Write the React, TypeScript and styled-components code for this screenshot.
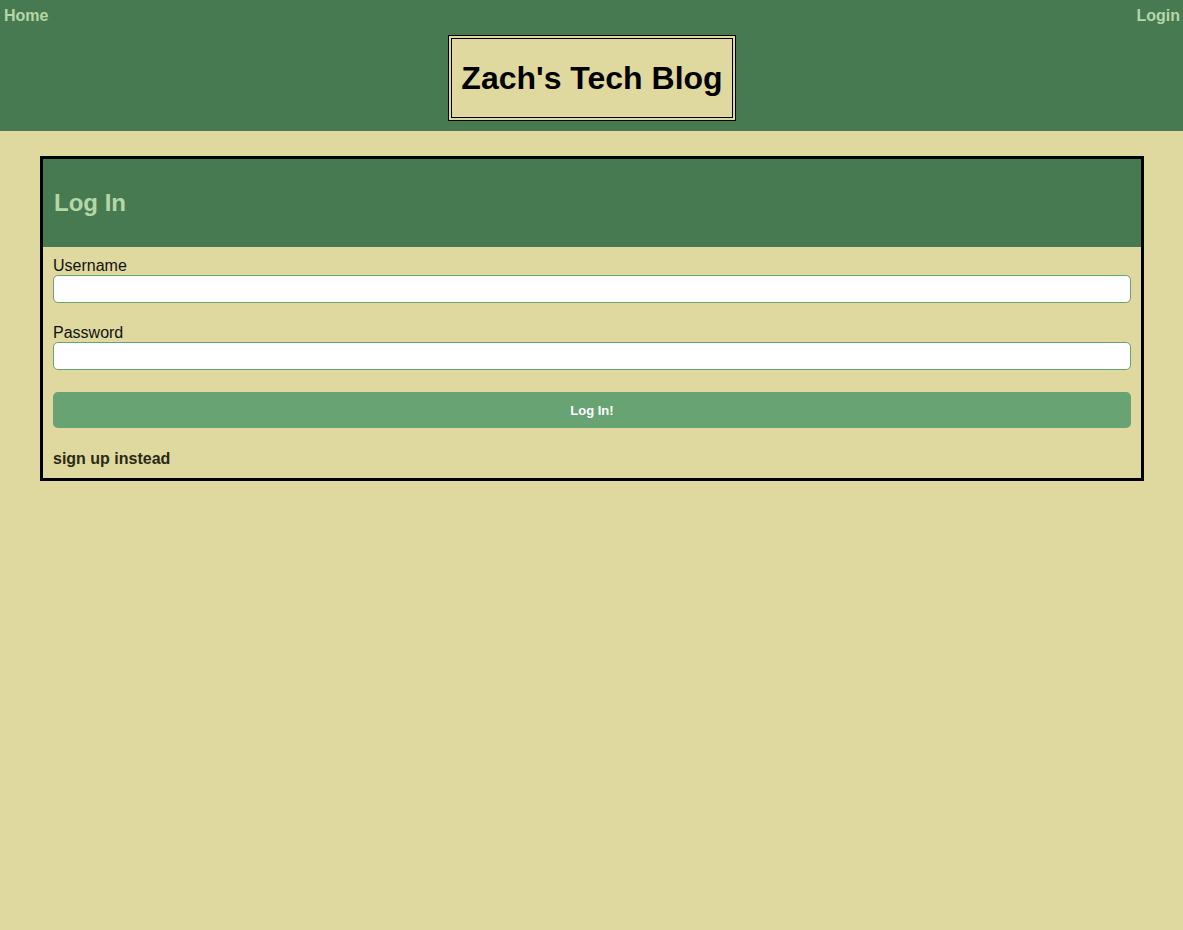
import styled, { createGlobalStyle } from "styled-components";

const GlobalStyle = createGlobalStyle`
  body {
    margin: 0;
    background-color: #dfd99f;
    font-family: "Liberation Sans", Arial, sans-serif;
  }
`;

const Header = styled.header`
  background-color: #487a52;
  padding-bottom: 10px;
`;

const Nav = styled.nav`
  display: flex;
  justify-content: space-between;
  align-items: center;
  height: 31px;
  padding: 0 3px 0 4px;
`;

const NavLink = styled.a`
  color: #b5d7a6;
  font-weight: bold;
  font-size: 16px;
  text-decoration: none;
  cursor: pointer;
`;

const TitleRow = styled.div`
  display: flex;
  justify-content: center;
  margin-top: 4px;
`;

const TitleBox = styled.div`
  background-color: #dfd99f;
  border: 4px double #000;
  padding: 0 9px;
  height: 78px;
  display: flex;
  align-items: center;
  margin-left: 1px;
`;

const Title = styled.h1`
  margin: 0;
  font-size: 32px;
  color: #000;
`;

const Card = styled.section`
  margin: 25px 39px 0 40px;
  border: 3px solid #000;
`;

const CardHeader = styled.div`
  background-color: #487a52;
  height: 88px;
  display: flex;
  align-items: center;
  padding: 0 11px;
`;

const CardTitle = styled.h2`
  margin: 0;
  font-size: 24px;
  color: #b5d7a6;
`;

const Form = styled.form`
  display: flex;
  flex-direction: column;
  padding: 10px 10px 10px;
`;

const Field = styled.div<{ gap: number }>`
  display: flex;
  flex-direction: column;
  margin-bottom: ${(props) => props.gap}px;
`;

const Label = styled.label`
  font-size: 16px;
  line-height: 18px;
  color: #111;
`;

const Input = styled.input`
  box-sizing: border-box;
  height: 28px;
  border: 1px solid #67a373;
  border-radius: 5px;
  background: #fff;
  padding: 0 6px;
  font-size: 16px;
`;

const Button = styled.button`
  height: 36px;
  border: none;
  border-radius: 5px;
  background-color: #67a373;
  color: #fff;
  font-family: "Liberation Sans", Arial, sans-serif;
  font-weight: bold;
  font-size: 13px;
  margin-bottom: 22px;
  cursor: pointer;
`;

const SignUp = styled.a`
  font-size: 16px;
  line-height: 18px;
  font-weight: bold;
  color: #2a2a14;
  text-decoration: none;
  cursor: pointer;
`;

function App() {
  return (
    <>
      <GlobalStyle />
      <Header>
        <Nav>
          <NavLink>Home</NavLink>
          <NavLink>Login</NavLink>
        </Nav>
        <TitleRow>
          <TitleBox>
            <Title>Zach's Tech Blog</Title>
          </TitleBox>
        </TitleRow>
      </Header>
      <Card>
        <CardHeader>
          <CardTitle>Log In</CardTitle>
        </CardHeader>
        <Form onSubmit={(e) => e.preventDefault()}>
          <Field gap={21}>
            <Label htmlFor="username">Username</Label>
            <Input id="username" type="text" />
          </Field>
          <Field gap={22}>
            <Label htmlFor="password">Password</Label>
            <Input id="password" type="password" />
          </Field>
          <Button type="submit">Log In!</Button>
          <SignUp>sign up instead</SignUp>
        </Form>
      </Card>
    </>
  );
}

export default App;
